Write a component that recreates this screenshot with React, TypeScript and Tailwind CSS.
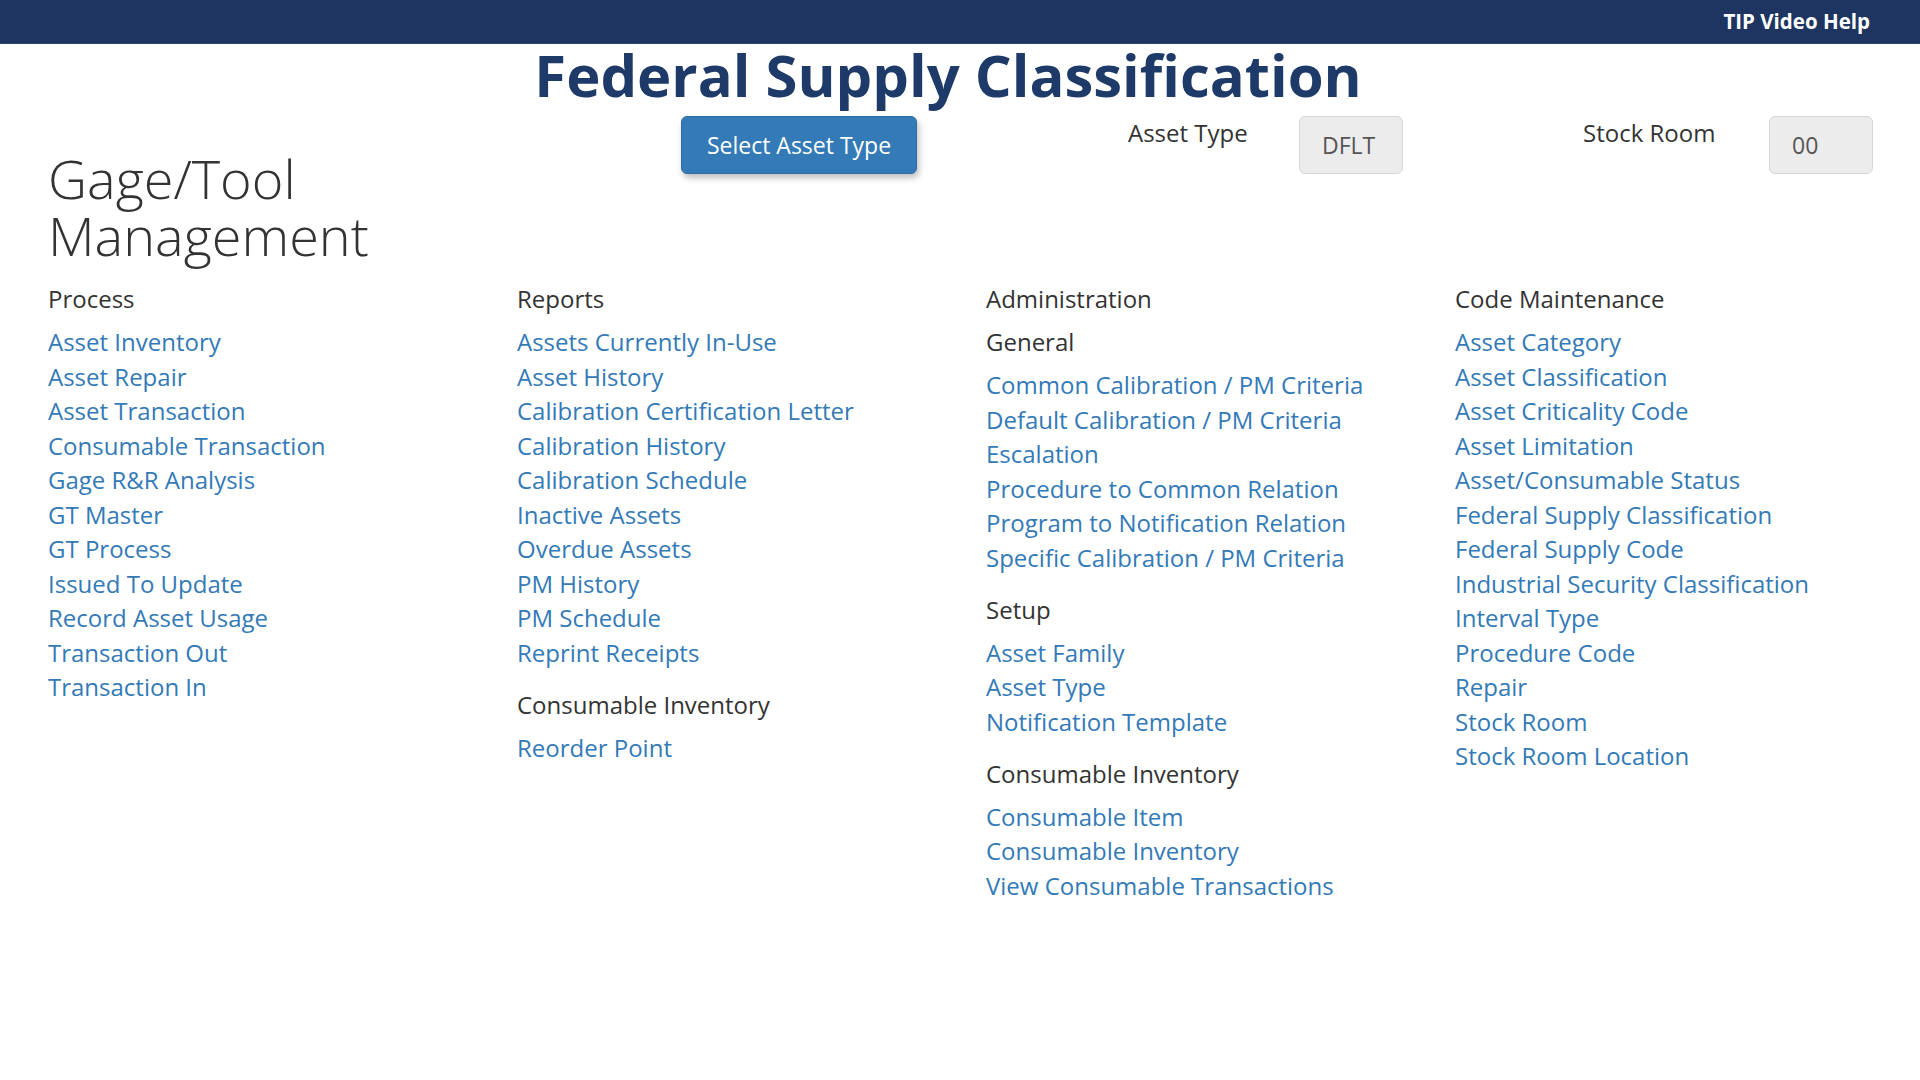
type Group = {
  title: string;
  items: string[];
};

type Column = {
  heading: string;
  groups: Group[];
};

const columns: Column[] = [
  {
    heading: "Process",
    groups: [
      {
        title: "",
        items: [
          "Asset Inventory",
          "Asset Repair",
          "Asset Transaction",
          "Consumable Transaction",
          "Gage R&R Analysis",
          "GT Master",
          "GT Process",
          "Issued To Update",
          "Record Asset Usage",
          "Transaction Out",
          "Transaction In",
        ],
      },
    ],
  },
  {
    heading: "Reports",
    groups: [
      {
        title: "",
        items: [
          "Assets Currently In-Use",
          "Asset History",
          "Calibration Certification Letter",
          "Calibration History",
          "Calibration Schedule",
          "Inactive Assets",
          "Overdue Assets",
          "PM History",
          "PM Schedule",
          "Reprint Receipts",
        ],
      },
      { title: "Consumable Inventory", items: ["Reorder Point"] },
    ],
  },
  {
    heading: "Administration",
    groups: [
      {
        title: "General",
        items: [
          "Common Calibration / PM Criteria",
          "Default Calibration / PM Criteria",
          "Escalation",
          "Procedure to Common Relation",
          "Program to Notification Relation",
          "Specific Calibration / PM Criteria",
        ],
      },
      {
        title: "Setup",
        items: ["Asset Family", "Asset Type", "Notification Template"],
      },
      {
        title: "Consumable Inventory",
        items: [
          "Consumable Item",
          "Consumable Inventory",
          "View Consumable Transactions",
        ],
      },
    ],
  },
  {
    heading: "Code Maintenance",
    groups: [
      {
        title: "",
        items: [
          "Asset Category",
          "Asset Classification",
          "Asset Criticality Code",
          "Asset Limitation",
          "Asset/Consumable Status",
          "Federal Supply Classification",
          "Federal Supply Code",
          "Industrial Security Classification",
          "Interval Type",
          "Procedure Code",
          "Repair",
          "Stock Room",
          "Stock Room Location",
        ],
      },
    ],
  },
];

const MenuColumn = ({ column }: { column: Column }) => {
  return (
    <div className="flex flex-col">
      <h3 className="text-[24px] leading-[34.5px] text-[#333333] mb-[8.5px]">
        {column.heading}
      </h3>
      {column.groups.map((group, gi) => (
        <div key={gi} className={gi > 0 ? "mt-[17.5px]" : ""}>
          {group.title && (
            <h4 className="text-[24px] leading-[34.5px] text-[#333333] mb-[8.5px]">
              {group.title}
            </h4>
          )}
          <ul>
            {group.items.map((item) => (
              <li key={item}>
                <a
                  href="#"
                  className="text-[24px] leading-[34.5px] text-[#337ab7] hover:underline"
                >
                  {item}
                </a>
              </li>
            ))}
          </ul>
        </div>
      ))}
    </div>
  );
};

const App = () => {
  return (
    <div
      className="min-h-screen w-[1920px] bg-white"
      style={{ fontFamily: '"Open Sans", "Noto Sans", sans-serif' }}
    >
      <header className="h-[44px] bg-[#1e3561] border-b border-[#2c4675] flex items-center justify-end pr-[50px]">
        <span className="text-white font-bold text-[20.5px]">TIP Video Help</span>
      </header>

      <h1 className="text-center text-[58px] leading-[62px] font-bold text-[#1e3a68] pr-[24px]">
        Federal Supply Classification
      </h1>

      <div className="mt-[10px] flex items-start">
        <div className="w-[681px] pl-[48px] pt-[34px]">
          <h2 className="text-[54px] leading-[57px] font-light text-[#333333]">
            <span className="block">Gage/Tool</span>
            <span className="block">Management</span>
          </h2>
        </div>
        <button className="w-[236px] h-[58px] rounded-[6px] bg-[#337ab7] border border-[#2e6da4] text-white text-[23px] shadow-[2px_4px_6px_rgba(0,0,0,0.25)]">
          Select Asset Type
        </button>
        <span className="ml-[211px] w-[120px] text-[24px] leading-[34.5px] text-[#333333]">
          Asset Type
        </span>
        <div className="ml-[51px] w-[104px] h-[58px] rounded-[6px] bg-[#ececec] border border-[#d6d6d6] flex items-center pl-[22px] text-[23px] text-[#555555]">
          DFLT
        </div>
        <span className="ml-[180px] w-[134px] text-[24px] leading-[34.5px] text-[#333333]">
          Stock Room
        </span>
        <div className="ml-[52px] w-[104px] h-[58px] rounded-[6px] bg-[#ececec] border border-[#d6d6d6] flex items-center pl-[22px] text-[23px] text-[#555555]">
          00
        </div>
      </div>

      <div className="mt-[18px] pl-[48px] grid grid-cols-[repeat(4,469px)]">
        {columns.map((column) => (
          <MenuColumn key={column.heading} column={column} />
        ))}
      </div>
    </div>
  );
};

export default App;
